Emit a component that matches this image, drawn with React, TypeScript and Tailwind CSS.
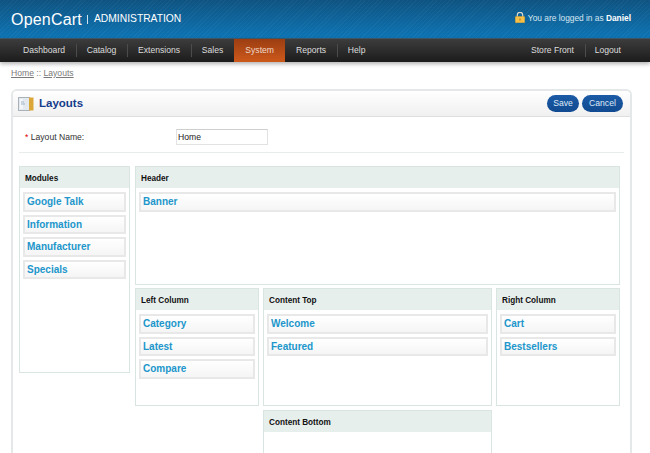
const font = "font-['Liberation_Sans',Arial,sans-serif]";

function Item({ label }: { label: string }) {
  return (
    <div className="h-[19.5px] border-2 border-[#e8e8e8] bg-gradient-to-b from-white to-[#f5f5f5] pl-[2px] text-[10px] font-bold leading-[15px] text-[#2196cb]">
      {label}
    </div>
  );
}

function Panel({ title, items, className }: { title: string; items: string[]; className: string }) {
  return (
    <div className={`border border-[#d9e5e3] bg-white ${className}`}>
      <div className="h-[21px] bg-[#e7efed] pl-[5px] pt-px text-[8.2px] font-bold leading-[21px] text-[#111]">{title}</div>
      <div className="flex flex-col gap-[3px] px-[3px] pt-[4px]">
        {items.map((i) => (
          <Item key={i} label={i} />
        ))}
      </div>
    </div>
  );
}

function NavItem({ label, active }: { label: string; active?: boolean }) {
  return (
    <div
      className={`flex h-full items-center px-[11px] text-[8.6px] ${
        active ? "bg-gradient-to-b from-[#9c3e12] to-[#cd591b] text-[#f1d9c9]" : "text-[#dcdcdc]"
      }`}
    >
      {label}
    </div>
  );
}

function Sep() {
  return <div className="my-[5px] -mr-[1.3px] w-px bg-[#4c4c4c]" />;
}

export default function App() {
  return (
    <div className={`${font} h-[453px] w-[650px] overflow-hidden bg-white`}>
      <header className="flex h-[38px] items-center justify-between bg-[repeating-linear-gradient(135deg,rgba(255,255,255,0.035)_0,rgba(255,255,255,0.035)_1px,transparent_1px,transparent_3px),linear-gradient(to_bottom,#0e5381,#0d74b4)] pl-[11px] pr-[19px]">
        <div className="flex items-center pt-px text-white">
          <span className="text-[16px] font-normal leading-none tracking-[0.2px]">OpenCart</span>
          <span className="mx-[5px] h-[9px] w-px bg-[#cfe2ef]" />
          <span className="ml-[1px] text-[10.3px] leading-none">ADMINISTRATION</span>
        </div>
        <div className="flex items-center pb-[2px] text-[8.35px] text-[#d6e6f1]">
          <svg width="10" height="11" viewBox="0 0 10 11" className="mr-[3px]">
            <path d="M2.3 5V3a2.7 2.7 0 0 1 5.4 0V5" fill="none" stroke="#d5d8cf" strokeWidth="1.2" />
            <rect x="0.3" y="4.5" width="9.4" height="6.2" rx="0.8" fill="#f4c04a" stroke="#dba329" strokeWidth="0.5" />
            <rect x="4.4" y="6.5" width="1.2" height="2" fill="#a87a1e" />
          </svg>
          <span>You are logged in as&nbsp;</span>
          <span className="font-bold text-white">Daniel</span>
        </div>
      </header>
      <nav className="flex h-[24px] items-stretch justify-between border-t border-[#3c5668] bg-gradient-to-b from-[#3d3d3d] to-[#1c1c1c] pl-[12px] pr-[18px] shadow-[0_2px_4px_rgba(0,0,0,0.3)]">
        <div className="flex items-stretch">
          <NavItem label="Dashboard" />
          <Sep />
          <NavItem label="Catalog" />
          <Sep />
          <NavItem label="Extensions" />
          <Sep />
          <NavItem label="Sales" />
          <NavItem label="System" active />
          <NavItem label="Reports" />
          <Sep />
          <NavItem label="Help" />
        </div>
        <div className="flex items-stretch">
          <NavItem label="Store Front" />
          <div className="my-[5px] -mr-[2.3px] w-px bg-[#4c4c4c]" />
          <NavItem label="Logout" />
        </div>
      </nav>
      <div className="px-[11px] pt-[5px]">
        <div className="mb-[10px] h-[12px] text-[8.6px] leading-[12px] text-[#7a7a7a]">
          <span className="underline">Home</span> :: <span className="underline">Layouts</span>
        </div>
        <section className="w-[621px] overflow-hidden rounded-t-[6px] border-2 border-b-0 border-[#e4e8e8]">
          <div className="flex h-[26px] items-center justify-between border-b border-[#dedede] bg-gradient-to-b from-white to-[#f0f0f0] pl-[5px] pr-[6px]">
            <div className="flex items-center">
              <svg width="16" height="14" viewBox="0 0 16 14">
                <rect x="0.5" y="0.5" width="11" height="13" fill="#e3e9ef" stroke="#a9b2ba" />
                <rect x="2" y="2" width="3" height="10" fill="#f4f7fa" />
                <rect x="11" y="0.5" width="4.5" height="13" fill="#dca739" />
                <path d="M3 5h3M3 7h4" stroke="#9fb3c8" />
              </svg>
              <h1 className="ml-[5px] text-[11.5px] font-bold text-[#163c8c]">Layouts</h1>
            </div>
            <div className="flex gap-[3px] pr-[1px]">
              <div className="flex h-[17px] w-[32px] items-center justify-center rounded-full bg-gradient-to-b from-[#1c5ba6] to-[#114a90] text-[8.6px] text-[#dfe9f5]">Save</div>
              <div className="flex h-[17px] w-[41px] items-center justify-center rounded-full bg-gradient-to-b from-[#1c5ba6] to-[#114a90] text-[8.6px] text-[#dfe9f5]">Cancel</div>
            </div>
          </div>
          <div className="px-[6px]">
            <div className="flex h-[36px] items-center border-b border-[#e8ecec] pl-[6px] pt-[4px]">
              <label className="mt-px w-[151px] text-[8.6px] text-[#333]">
                <span className="text-[#d00]">*</span> Layout Name:
              </label>
              <div className="flex h-[16px] w-[92px] items-center border border-[#e2e2e2] border-t-[#cfcfcf] pl-[1px] pt-px text-[8.6px] text-[#222]">Home</div>
            </div>
            <div className="mt-[13px] flex gap-[5px]">
              <Panel title="Modules" className="h-[207px] w-[111px] shrink-0" items={["Google Talk", "Information", "Manufacturer", "Specials"]} />
              <div className="flex w-[485px] flex-col">
                <Panel title="Header" className="h-[119px]" items={["Banner"]} />
                <div className="mt-[3px] flex gap-[4px]">
                  <Panel title="Left Column" className="h-[118px] w-[124px]" items={["Category", "Latest", "Compare"]} />
                  <Panel title="Content Top" className="h-[118px] w-[229px]" items={["Welcome", "Featured"]} />
                  <Panel title="Right Column" className="h-[118px] w-[124px]" items={["Cart", "Bestsellers"]} />
                </div>
                <div className="mt-[4px] pl-[128px]">
                  <Panel title="Content Bottom" className="h-[60px] w-[229px]" items={[]} />
                </div>
              </div>
            </div>
          </div>
        </section>
      </div>
    </div>
  );
}
